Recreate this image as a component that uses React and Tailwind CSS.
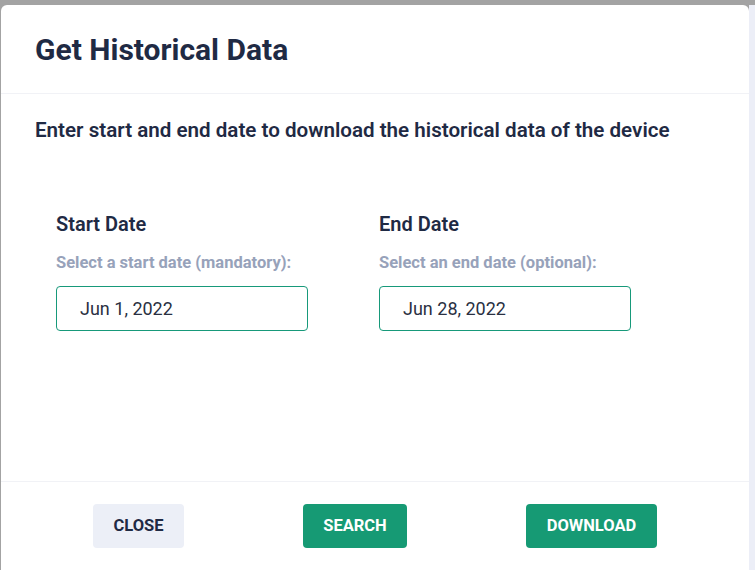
import React from "react";

function DateField({ title, hint, value }) {
  return (
    <div className="w-[252px]">
      <h3 className="text-[20px] font-semibold leading-[24px] text-[#1f2a44]">{title}</h3>
      <p className="mt-[17px] text-[16.5px] font-bold leading-[20px] text-[#97a2ba]">{hint}</p>
      <div className="mt-[13px] h-[45px] rounded-[4px] border border-[#17997a] px-[23px] flex items-center text-[18px] text-[#2a3042]">
        {value}
      </div>
    </div>
  );
}

export default function App() {
  return (
    <div
      className="h-[570px] w-[755px] overflow-hidden bg-[#a3a3a3] pt-[5px] flex"
      style={{ fontFamily: "Roboto, 'Noto Sans', sans-serif" }}
    >
      <div className="w-[1px] shrink-0" />
      <div className="w-[748px] h-[600px] bg-white rounded-t-[6px] flex flex-col">
        <header className="h-[89px] px-[34px] flex items-center border-b border-[#f1f2f6]">
          <h1 className="text-[30px] font-bold text-[#1f2a44]">Get Historical Data</h1>
        </header>

        <main className="h-[388px] px-[34px] border-b border-[#f1f2f6]">
          <p className="mt-[24px] text-[20.6px] font-semibold leading-[24px] text-[#1f2a44]">
            Enter start and end date to download the historical data of the device
          </p>
          <div className="mt-[70px] pl-[21px] flex gap-[71px]">
            <DateField title="Start Date" hint="Select a start date (mandatory):" value="Jun 1, 2022" />
            <DateField title="End Date" hint="Select an end date (optional):" value="Jun 28, 2022" />
          </div>
        </main>

        <footer className="pt-[22px] px-[92px] flex justify-between">
          <button className="h-[44px] w-[91px] rounded-[4px] bg-[#eceff7] text-[16.5px] font-bold text-[#1f2a44] uppercase">
            Close
          </button>
          <button className="h-[44px] w-[104px] rounded-[4px] bg-[#169a74] text-[16.5px] font-bold text-white uppercase">
            Search
          </button>
          <button className="h-[44px] w-[131px] rounded-[4px] bg-[#169a74] text-[16.5px] font-bold text-white uppercase">
            Download
          </button>
        </footer>
      </div>
      <div className="w-[6px] h-full bg-[#eceef7]" />
    </div>
  );
}
